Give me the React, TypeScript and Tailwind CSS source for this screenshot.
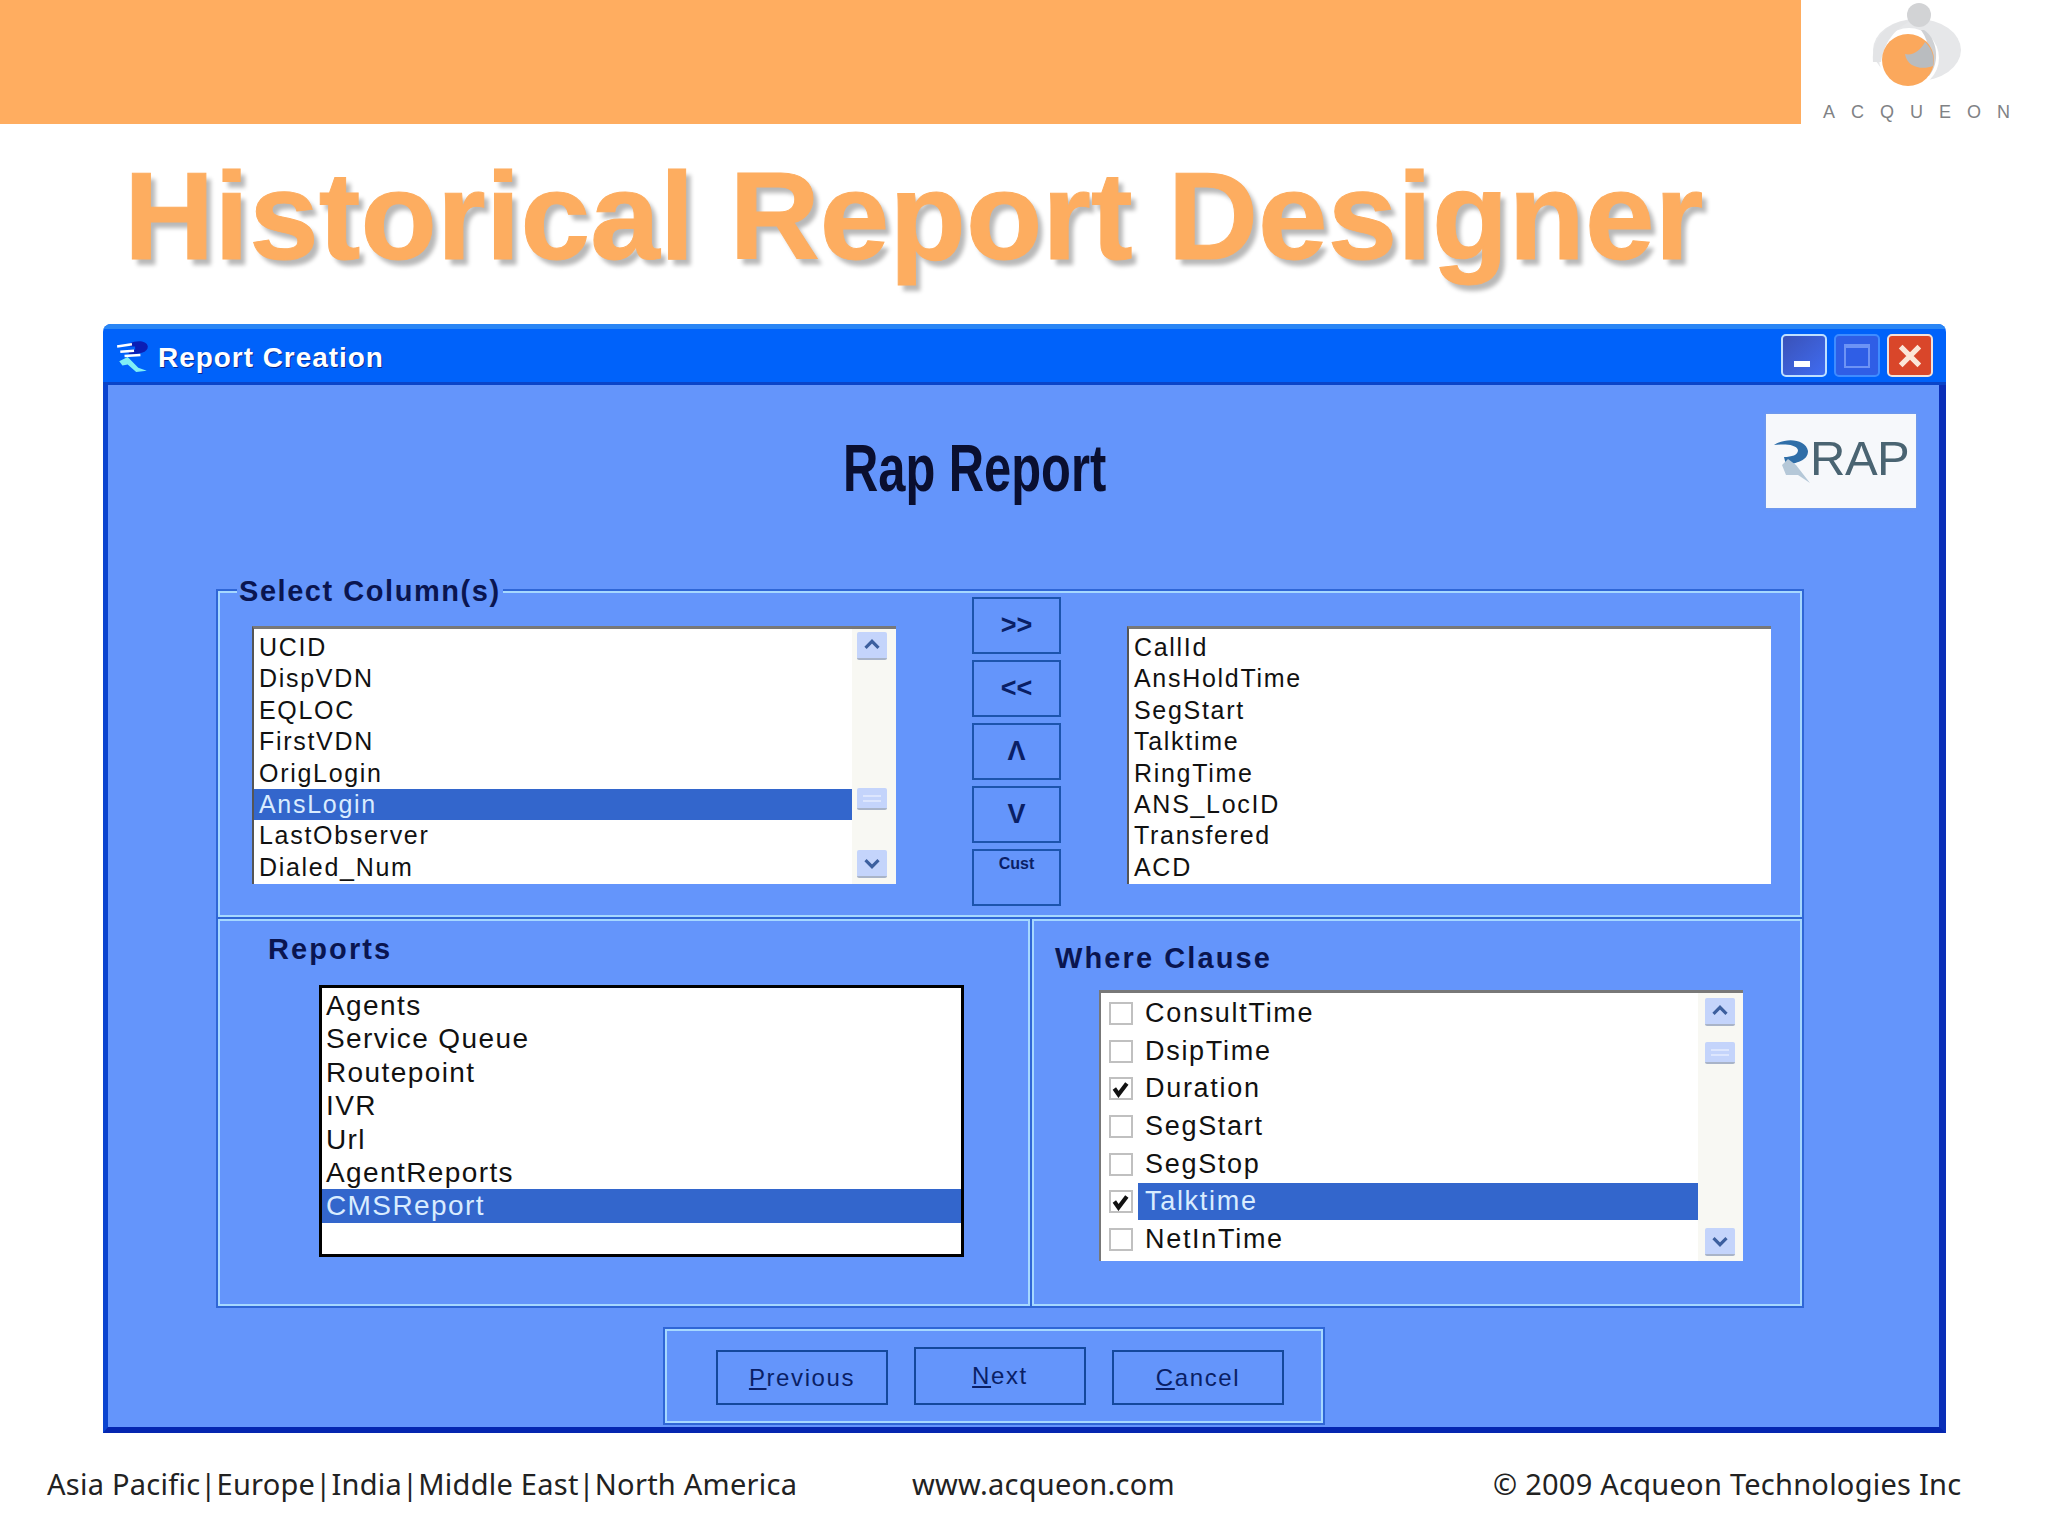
import React from "react";

const sans = "font-['Liberation_Sans',Arial,sans-serif]";

function Chevron({ up }: { up?: boolean }) {
  return (
    <svg viewBox="0 0 30 28" className="w-full h-full">
      <path
        d={up ? "M8 17 L15 10 L22 17" : "M8 11 L15 18 L22 11"}
        fill="none"
        stroke="#3c5f9e"
        strokeWidth="3.4"
      />
    </svg>
  );
}

function ScrollBtn({ up }: { up?: boolean }) {
  return (
    <div className="w-[30px] h-[28px] rounded-[2px] bg-[#c4d4fb] border-b-2 border-[#a9b4c8]">
      <Chevron up={up} />
    </div>
  );
}

function Thumb() {
  return (
    <div className="w-[30px] h-[22px] rounded-[2px] bg-[#c4d4fb] border-b-2 border-[#a9b4c8] flex flex-col justify-center gap-[3px] px-[6px]">
      <div className="h-[2px] bg-[#dde6fd]" />
      <div className="h-[2px] bg-[#dde6fd]" />
    </div>
  );
}

function ColList({ items, selected, scroll }: { items: string[]; selected?: number; scroll?: boolean }) {
  return (
    <div className="w-[644px] h-[258px] bg-white border-t-[3px] border-t-[#787878] border-l-2 border-l-[#555] flex">
      <div className="flex-1 pt-[3px] flex flex-col">
        {items.map((t, i) => (
          <div
            key={t}
            className={`h-[31.4px] leading-[31.4px] text-[25px] tracking-[1.7px] pl-[5px] ${i === selected ? "bg-[#3366cc] text-[#d9ecff]" : "text-[#111]"}`}
          >
            {t}
          </div>
        ))}
      </div>
      {scroll && (
        <div className="w-[44px] bg-[#f8f8f3] flex flex-col items-center pt-[3px] pb-[6px] pr-[5px]">
          <ScrollBtn up />
          <div className="mt-[128px]">
            <Thumb />
          </div>
          <div className="mt-auto">
            <ScrollBtn />
          </div>
        </div>
      )}
    </div>
  );
}

function SideBtn({ label, small }: { label: string; small?: boolean }) {
  return (
    <div
      className={`w-[89px] h-[57px] border-2 border-[#1c54ad] flex justify-center font-bold text-[#0a1f66] ${small ? "text-[16px] pt-[1px]" : "text-[27px] items-center"}`}
    >
      {label}
    </div>
  );
}

function CheckRow({ label, checked, selected }: { label: string; checked?: boolean; selected?: boolean }) {
  return (
    <div className="h-[37.6px] flex items-center pl-[8px]">
      <div className="w-[24px] h-[23px] border-2 border-[#c0c0c0] bg-white shrink-0 flex items-center justify-center">
        {checked && (
          <svg viewBox="0 0 24 23" className="w-[20px] h-[20px]">
            <path d="M4 11 L9 18 L19 5" fill="none" stroke="#111" strokeWidth="5" />
          </svg>
        )}
      </div>
      <div
        className={`ml-[5px] h-[37px] flex-1 pl-[7px] leading-[37px] text-[27px] tracking-[1.7px] ${selected ? "bg-[#3366cc] text-[#d9ecff]" : "text-[#111]"}`}
      >
        {label}
      </div>
    </div>
  );
}

function FootBtn({ label, rest, tall }: { label: string; rest: string; tall?: boolean }) {
  return (
    <div
      className={`w-[172px] border-2 border-[#14489c] flex items-center justify-center text-[24px] tracking-[1.6px] text-[#0a1f66] ${tall ? "h-[58px] mt-[18px]" : "h-[55px] mt-[21px]"}`}
    >
      <span className="underline">{label}</span>
      {rest}
    </div>
  );
}

function WinBtn({ kind }: { kind: "min" | "max" | "close" }) {
  if (kind === "close") {
    return (
      <div className="w-[46px] h-[43px] rounded-[5px] border-2 border-[#f4e2da] bg-[#d9462a] flex items-center justify-center">
        <svg viewBox="0 0 24 24" className="w-[28px] h-[28px]">
          <path d="M4 4 L20 20 M20 4 L4 20" stroke="#fbe6d8" strokeWidth="4.5" />
        </svg>
      </div>
    );
  }
  if (kind === "max") {
    return (
      <div className="w-[46px] h-[43px] rounded-[5px] border-2 border-[#3f8cff] bg-[#2f5ee6] flex items-center justify-center">
        <div className="w-[26px] h-[24px] border-2 border-[#6d93f5] border-t-[4px]" />
      </div>
    );
  }
  return (
    <div className="w-[46px] h-[43px] rounded-[5px] border-2 border-[#bfe0ff] bg-gradient-to-br from-[#3a52b8] to-[#3f6cf2] flex items-end pb-[8px] pl-[11px]">
      <div className="w-[16px] h-[6px] bg-white" />
    </div>
  );
}

function Logo() {
  return (
    <div className="w-[247px] h-[124px] flex flex-col items-start">
      <svg viewBox="0 0 247 100" className="w-[247px] h-[100px] shrink-0">
        <ellipse cx="116" cy="50" rx="44" ry="31" fill="#e6e7e9" />
        <circle cx="108" cy="58" r="30" fill="#ffffff" />
        <path d="M72 62 C70 34 92 20 112 20 C98 26 84 38 80 62 Z" fill="#e3e4e6" />
        <path d="M123 30 C136 38 140 62 128 76 L122 76 C130 60 130 44 120 30 Z" fill="#cfd1d4" />
        <circle cx="118" cy="15" r="12" fill="#d2d3d5" />
        <circle cx="107" cy="60" r="26" fill="#fba85c" />
        <path d="M104 54 C112 56 120 50 124 42 C131 48 134 58 132 66 C122 70 106 68 104 54 Z" fill="#b9bcbf" />
      </svg>
      <div className={`${sans} text-[18px] leading-[18px] tracking-[16px] pl-[22px] text-[#808285] mt-[3px] whitespace-nowrap`}>
        ACQUEON
      </div>
    </div>
  );
}

function AppIcon() {
  return (
    <svg viewBox="0 0 34 34" className="w-[36px] h-[36px] shrink-0">
      <path d="M14 5 C20 2 30 2 31 8 C31 14 22 15 18 15 L13 15 L13 11 L19 11 L19 8 L14 8 Z" fill="#0b1fb5" />
      <path d="M2 8 L16 6 M5 13 L18 12 M9 17 L24 16" stroke="#ffffff" strokeWidth="2.4" />
      <path d="M4 22 L12 18 L22 28 L30 31 L20 32 L12 25 L7 26 Z" fill="#7ff0f5" />
    </svg>
  );
}

function RapLogo() {
  return (
    <div className="w-[150px] h-[94px] bg-[#f6f8fb] shadow-[0_0_3px_#7e9fd8] flex items-center pl-[6px] pb-[6px]">
      <svg viewBox="0 0 44 50" className="w-[44px] h-[50px] shrink-0 -mr-[6px] mt-[12px]">
        <path d="M2 6 C14 -2 34 0 36 12 C36 22 24 24 14 26 L12 18 C20 18 26 16 26 11 C24 5 12 5 2 6 Z" fill="#2f6ea8" />
        <path d="M10 26 L16 20 L24 26 L38 44 L26 36 L14 36 Z" fill="#b5c8d8" />
      </svg>
      <div className="text-[49px] leading-[49px] text-[#4a6472] tracking-[-0.5px]">RAP</div>
    </div>
  );
}

const leftItems = ["UCID", "DispVDN", "EQLOC", "FirstVDN", "OrigLogin", "AnsLogin", "LastObserver", "Dialed_Num"];
const rightItems = ["CallId", "AnsHoldTime", "SegStart", "Talktime", "RingTime", "ANS_LocID", "Transfered", "ACD"];
const reportItems = ["Agents", "Service Queue", "Routepoint", "IVR", "Url", "AgentReports", "CMSReport"];
const whereItems: [string, boolean, boolean][] = [
  ["ConsultTime", false, false],
  ["DsipTime", false, false],
  ["Duration", true, false],
  ["SegStart", false, false],
  ["SegStop", false, false],
  ["Talktime", true, true],
  ["NetInTime", false, false],
];

const heading = "font-bold text-[29px] text-[#0a1550]";
const groupLine = "border-2 border-[#2f66d6] shadow-[inset_2px_2px_0_#a6d8ff,inset_-2px_-2px_0_#a6d8ff]";

export default function App() {
  return (
    <div className={`${sans} w-[2048px] h-[1536px] bg-white overflow-hidden flex flex-col`}>
      <div className="flex h-[124px] shrink-0">
        <div className="w-[1801px] bg-[#ffad60]" />
        <Logo />
      </div>

      <div className="h-[200px] shrink-0 pl-[124px] pt-[27px]">
        <div className="font-bold text-[125px] leading-[130px] tracking-[0.1px] text-[#fdad60] [text-shadow:5px_6px_4px_#b9b9b9] [-webkit-text-stroke:1px_#fdad60] whitespace-nowrap">
          Historical Report Designer
        </div>
      </div>

      <div className="ml-[103px] w-[1843px] h-[1109px] shrink-0 flex flex-col rounded-t-[8px] overflow-hidden">
        <div className="h-[61px] shrink-0 bg-[#0062fa] border-t-[5px] border-t-[#2a86f5] border-b-[3px] border-b-[#0a44c8] flex items-center pl-[12px] pr-[13px]">
          <AppIcon />
          <div className="ml-[7px] mt-[4px] font-bold text-[28px] tracking-[0.95px] text-white [text-shadow:1px_1px_0_#0b2a90]">
            Report Creation
          </div>
          <div className="ml-auto flex gap-[7px]">
            <WinBtn kind="min" />
            <WinBtn kind="max" />
            <WinBtn kind="close" />
          </div>
        </div>

        <div className="flex-1 bg-[#6495fb] border-l-[5px] border-l-[#0a44d0] border-r-[7px] border-r-[#0a2fb8] border-b-[6px] border-b-[#0526b0] flex flex-col min-h-0">
          <div className="h-[204px] shrink-0 flex items-start">
            <div className="ml-[735px] mt-[51px] origin-left scale-x-[0.74] font-bold text-[66px] leading-[64px] text-[#0a0f30] whitespace-nowrap">
              Rap Report
            </div>
            <div className="ml-auto mr-[23px] mt-[29px]">
              <RapLogo />
            </div>
          </div>

          <div className="ml-[108px] w-[1588px]">
            <div className={`relative h-[330px] flex ${groupLine}`}>
              <div className={`absolute left-[19px] -top-[18px] px-[2px] bg-[#6495fb] leading-[36px] tracking-[1.55px] ${heading}`}>
                Select Column(s)
              </div>
              <div className="ml-[34px] mt-[35px]">
                <ColList items={leftItems} selected={5} scroll />
              </div>
              <div className="ml-[76px] mt-[6px] flex flex-col gap-[6px]">
                <SideBtn label=">>" />
                <SideBtn label="<<" />
                <SideBtn label="Λ" />
                <SideBtn label="V" />
                <SideBtn label="Cust" small />
              </div>
              <div className="ml-[66px] mt-[35px]">
                <ColList items={rightItems} />
              </div>
            </div>

            <div className="flex h-[389px]">
              <div className={`w-[814px] ${groupLine} border-t-0 border-r-0`}>
                <div className={`ml-[50px] mt-[12px] h-[36px] leading-[36px] tracking-[2.1px] ${heading}`}>Reports</div>
                <div className="ml-[101px] mt-[18px] w-[645px] h-[272px] bg-white border-[3px] border-black pt-[1px]">
                  {reportItems.map((t, i) => (
                    <div
                      key={t}
                      className={`h-[33.4px] leading-[33.4px] pl-[4px] text-[28px] tracking-[1.4px] ${i === 6 ? "bg-[#3366cc] text-[#d9ecff]" : "text-[#111]"}`}
                    >
                      {t}
                    </div>
                  ))}
                </div>
              </div>
              <div className={`flex-1 ${groupLine} border-t-0`}>
                <div className={`ml-[23px] mt-[21px] h-[36px] leading-[36px] tracking-[2.1px] ${heading}`}>Where Clause</div>
                <div className="ml-[67px] mt-[14px] w-[644px] h-[271px] bg-white border-t-[3px] border-t-[#787878] border-l-2 border-l-[#777] flex">
                  <div className="w-[597px] pt-[2px]">
                    {whereItems.map(([label, checked, selected]) => (
                      <CheckRow key={label} label={label} checked={checked} selected={selected} />
                    ))}
                  </div>
                  <div className="flex-1 bg-[#f8f8f3] flex flex-col items-center pt-[5px] pb-[5px] pr-[2px]">
                    <ScrollBtn up />
                    <div className="mt-[16px]">
                      <Thumb />
                    </div>
                    <div className="mt-auto">
                      <ScrollBtn />
                    </div>
                  </div>
                </div>
              </div>
            </div>
          </div>

          <div className={`ml-[555px] mt-[19px] w-[662px] h-[98px] flex pl-[51px] gap-[26px] ${groupLine}`}>
            <FootBtn label="P" rest="revious" />
            <FootBtn label="N" rest="ext" tall />
            <FootBtn label="C" rest="ancel" />
          </div>
        </div>
      </div>

      <div className="flex-1 flex items-start pt-[31px] pl-[47px] font-['Noto_Sans',sans-serif] text-[29px] tracking-[0.25px] leading-[40px] text-[#222] whitespace-nowrap">
        <div className="w-[865px]">Asia Pacific|Europe|India|Middle East|North America</div>
        <div className="w-[581px]">www.acqueon.com</div>
        <div>© 2009 Acqueon Technologies Inc</div>
      </div>
    </div>
  );
}
